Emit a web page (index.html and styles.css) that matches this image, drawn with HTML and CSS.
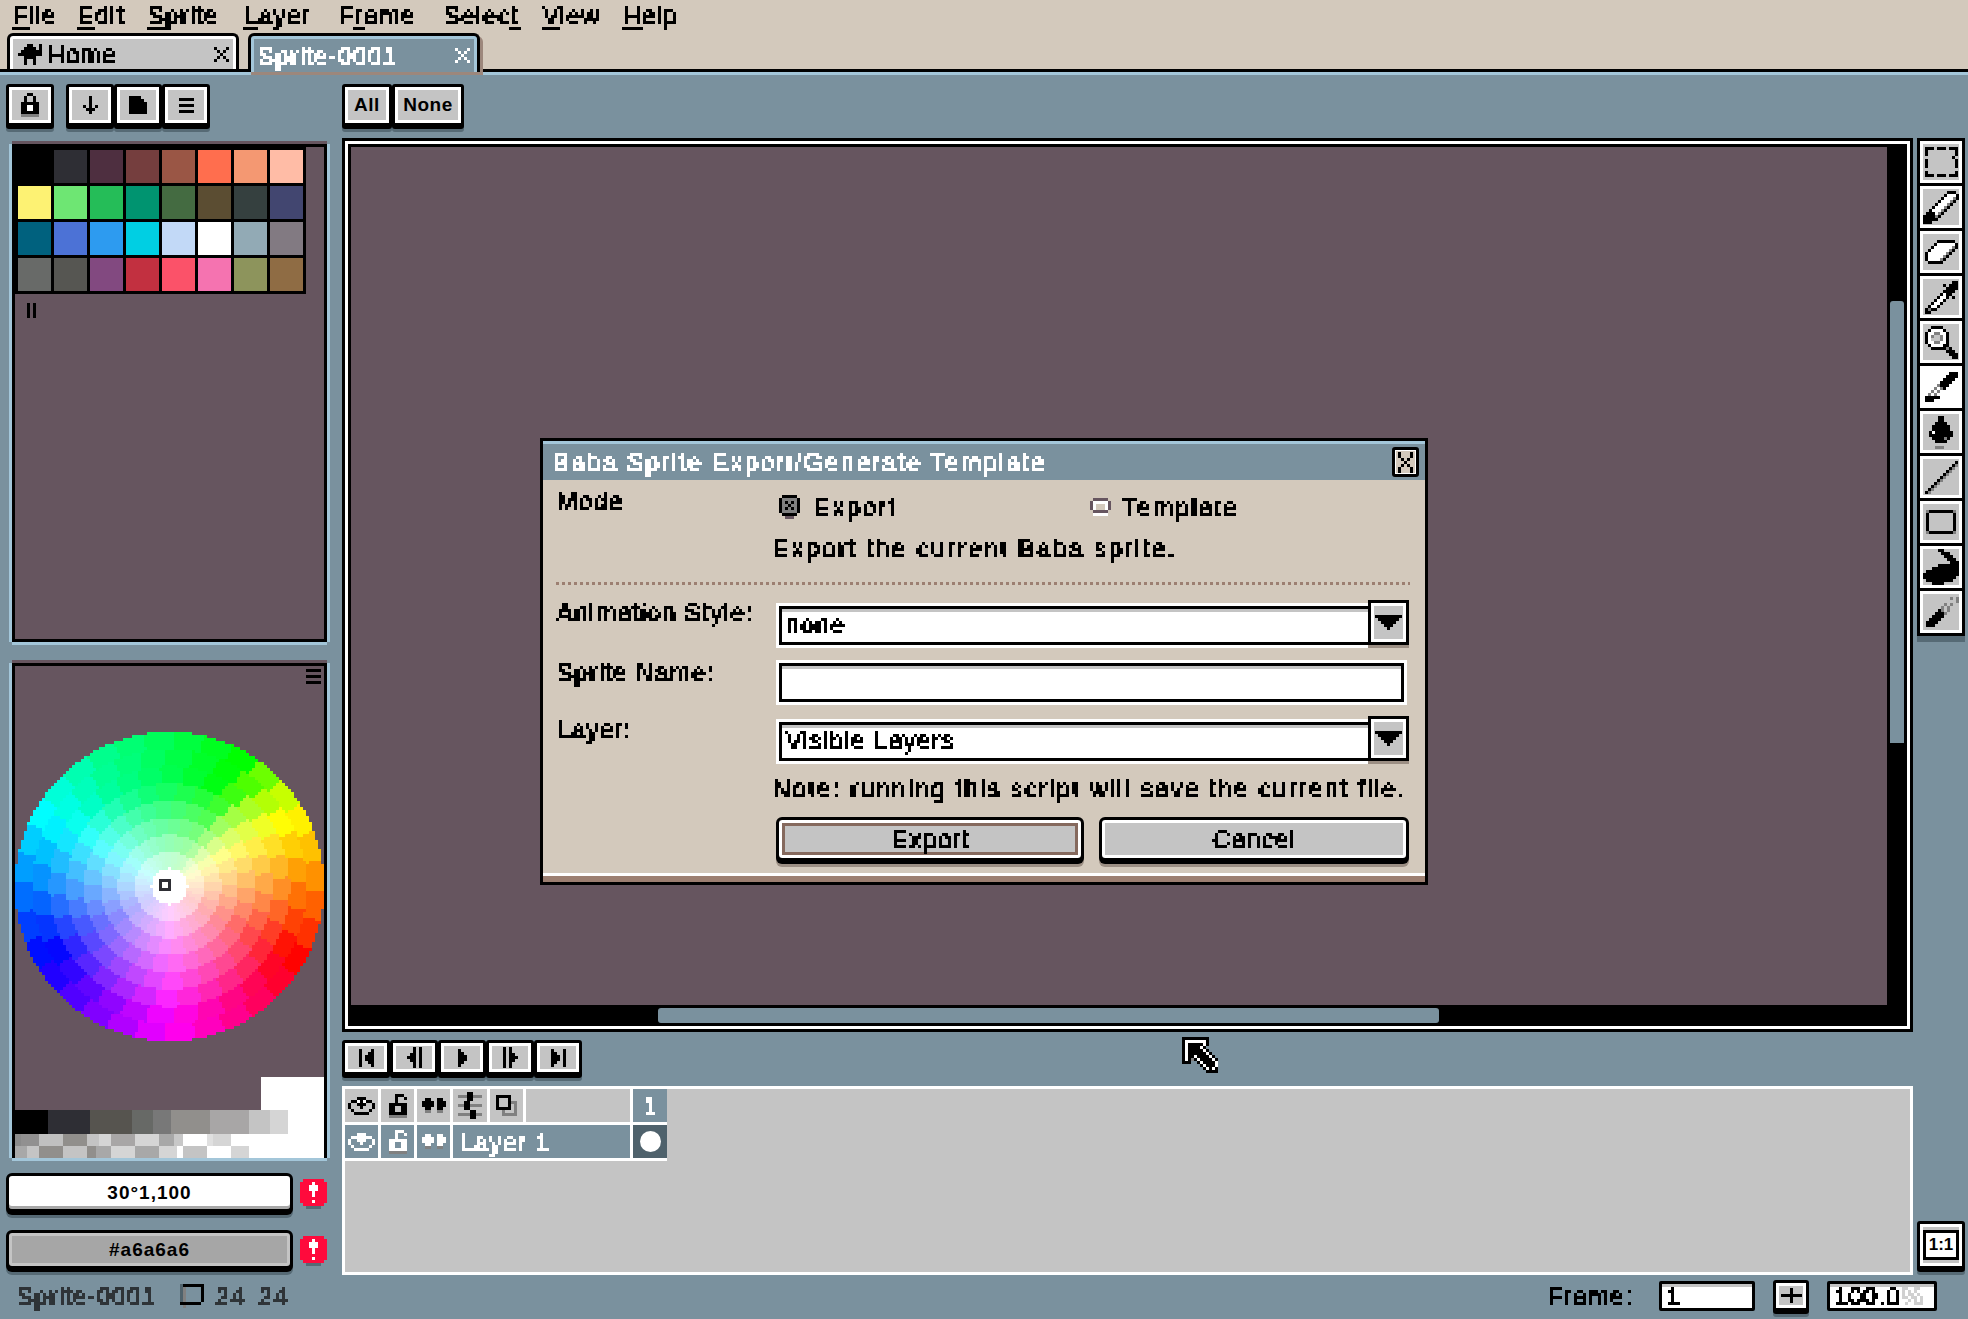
FILE: index.html
```html
<!DOCTYPE html>
<html lang="en">
<head>
    <meta charset="UTF-8">
    <title>Aseprite</title>
    <link rel="stylesheet" href="styles.css">
</head>
<body>

    <!-- blocky look for the text -->
    <svg class="defs" width="0" height="0">
        <filter id="pix" filterUnits="userSpaceOnUse" x="-9" y="-9" width="1200" height="60" color-interpolation-filters="sRGB">
            <feOffset in="SourceGraphic" dx="1" dy="0" result="ox"/>
            <feOffset in="SourceGraphic" dx="0" dy="1" result="oy"/>
            <feOffset in="SourceGraphic" dx="1" dy="1" result="oxy"/>
            <feMerge result="fat">
                <feMergeNode in="SourceGraphic"/>
                <feMergeNode in="ox"/>
                <feMergeNode in="oy"/>
                <feMergeNode in="oxy"/>
            </feMerge>
            <feFlood x="1" y="1" width="1" height="1"/>
            <feComposite width="3" height="3"/>
            <feTile result="grid"/>
            <feComposite in="fat" in2="grid" operator="in"/>
            <feComponentTransfer><feFuncA type="discrete" tableValues="0 0 1"/></feComponentTransfer>
            <feMorphology operator="dilate" radius="1"/>
        </filter>
    </svg>

    <div class="menubar">
        <span class="t m-file"><u>F</u>ile</span>
        <span class="t m-edit"><u>E</u>dit</span>
        <span class="t m-sprite"><u>S</u>prite</span>
        <span class="t m-layer"><u>L</u>ayer</span>
        <span class="t m-frame">F<u>r</u>ame</span>
        <span class="t m-select">Selec<u>t</u></span>
        <span class="t m-view"><u>V</u>iew</span>
        <span class="t m-help"><u>H</u>elp</span>
    </div>

    <div class="tabbar">
        <div class="tab tab-home">
            <i class="ic" data-i="home"></i>
            <span class="t tab-name">Home</span>
            <i class="ic" data-i="close"></i>
        </div>
        <div class="tab tab-active">
            <span class="t tab-name">Sprite-0001</span>
            <i class="ic" data-i="close"></i>
        </div>
    </div>

    <div class="main">
        <div class="left">
            <div class="toolbar">
                <div class="btn btn-lock"><i class="ic" data-i="lock"></i></div>
                <div class="btn-group">
                    <div class="btn btn-sq"><i class="ic" data-i="down"></i></div>
                    <div class="btn btn-sq"><i class="ic" data-i="page"></i></div>
                    <div class="btn btn-sq"><i class="ic" data-i="menu"></i></div>
                </div>
            </div>

            <div class="panel panel-palette">
                <div class="palette">
                    <b class="c0"></b><b class="c1"></b><b class="c2"></b><b class="c3"></b><b class="c4"></b><b class="c5"></b><b class="c6"></b><b class="c7"></b>
                    <b class="c8"></b><b class="c9"></b><b class="c10"></b><b class="c11"></b><b class="c12"></b><b class="c13"></b><b class="c14"></b><b class="c15"></b>
                    <b class="c16"></b><b class="c17"></b><b class="c18"></b><b class="c19"></b><b class="c20"></b><b class="c21"></b><b class="c22"></b><b class="c23"></b>
                    <b class="c24"></b><b class="c25"></b><b class="c26"></b><b class="c27"></b><b class="c28"></b><b class="c29"></b><b class="c30"></b><b class="c31"></b>
                </div>
                <div class="pause"><i class="ic" data-i="pause"></i></div>
            </div>

            <div class="panel panel-color">
                <div class="color-head"><i class="ic" data-i="menu"></i></div>
                <div class="wheel-box">
                    <canvas id="wheel" width="103" height="103"></canvas>
                    <span class="wheel-mark"></span>
                </div>
                <div class="white-block"></div>
                <div class="shades"></div>
                <div class="checks checks-a"></div>
                <div class="checks checks-b"></div>
            </div>

            <div class="color-row">
                <div class="pill pill-white"><span class="pill-text">30°1,100</span></div>
                <i class="warn ic" data-i="warn"></i>
            </div>
            <div class="color-row color-row-2">
                <div class="pill pill-gray"><span class="pill-text">#a6a6a6</span></div>
                <i class="warn ic" data-i="warn"></i>
            </div>
        </div>

        <div class="center">
            <div class="toolbar">
                <div class="btn-group">
                    <div class="btn btn-all"><span class="btn-bold">All</span></div>
                    <div class="btn btn-none"><span class="btn-bold">None</span></div>
                </div>
            </div>

            <div class="frame">
                <div class="frame-in">
                    <div class="canvas"></div>
                    <div class="scroll-v"><span class="thumb-v"></span></div>
                    <div class="scroll-h"><span class="thumb-h"></span></div>
                    <div class="scroll-end"></div>
                </div>
            </div>

            <div class="anim-row">
                <div class="btn btn-anim"><i class="ic" data-i="first"></i></div>
                <div class="btn btn-anim"><i class="ic" data-i="prev"></i></div>
                <div class="btn btn-anim"><i class="ic" data-i="play"></i></div>
                <div class="btn btn-anim"><i class="ic" data-i="next"></i></div>
                <div class="btn btn-anim"><i class="ic" data-i="last"></i></div>
            </div>

            <div class="timeline">
                <div class="tl-grid">
                    <div class="tl-cell"><i class="ic" data-i="eye"></i></div>
                    <div class="tl-cell"><i class="ic" data-i="unlock"></i></div>
                    <div class="tl-cell"><i class="ic" data-i="dots"></i></div>
                    <div class="tl-cell"><i class="ic" data-i="sliders"></i></div>
                    <div class="tl-cell"><i class="ic" data-i="overlap"></i></div>
                    <div class="tl-cell"></div>
                    <div class="tl-cell tl-blue"><span class="t tl-num">1</span></div>

                    <div class="tl-cell tl-blue"><i class="ic" data-i="eye"></i></div>
                    <div class="tl-cell tl-blue"><i class="ic" data-i="unlock"></i></div>
                    <div class="tl-cell tl-blue"><i class="ic" data-i="dots"></i></div>
                    <div class="tl-cell tl-blue tl-name"><span class="t">Layer 1</span></div>
                    <div class="tl-cell tl-dark"><span class="cel-dot"></span></div>
                </div>
            </div>

            <!-- dialog sits on top of the canvas -->
            <div class="dialog">
                <div class="dlg-title">
                    <span class="t dlg-title-text">Baba Sprite Export/Generate Template</span>
                    <div class="dlg-close"><i class="ic" data-i="x"></i></div>
                </div>
                <div class="dlg-body">
                    <div class="dlg-mode">
                        <span class="t dlg-label">Mode</span>
                        <div class="dlg-radios">
                            <div class="radio radio-a"><i class="ic" data-i="radioOn"></i><span class="t">Export</span></div>
                            <div class="radio"><i class="ic" data-i="radioOff"></i><span class="t">Template</span></div>
                        </div>
                    </div>
                    <p class="t dlg-text dlg-desc">Export the current Baba sprite.</p>
                    <div class="dlg-sep"></div>

                    <div class="dlg-row dlg-row-anim">
                        <span class="t dlg-label">Animation Style:</span>
                        <div class="combo">
                            <div class="input combo-input"><span class="t">none</span></div>
                            <div class="combo-btn"><i class="ic" data-i="tri"></i></div>
                        </div>
                    </div>
                    <div class="dlg-row dlg-row-name">
                        <span class="t dlg-label">Sprite Name:</span>
                        <div class="input name-input"></div>
                    </div>
                    <div class="dlg-row dlg-row-layer">
                        <span class="t dlg-label">Layer:</span>
                        <div class="combo">
                            <div class="input combo-input"><span class="t">Visible Layers</span></div>
                            <div class="combo-btn"><i class="ic" data-i="tri"></i></div>
                        </div>
                    </div>
                    <p class="t dlg-text dlg-note">Note: running this script will save the current file.</p>
                    <div class="dlg-buttons">
                        <div class="dbtn dbtn-focus"><span class="t">Export</span></div>
                        <div class="dbtn"><span class="t">Cancel</span></div>
                    </div>
                </div>
            </div>

            <i class="ic cursor" data-i="cursor"></i>
        </div>

        <div class="right">
            <div class="tools">
                <div class="tool"><i class="ic" data-i="marquee"></i></div>
                <div class="tool"><i class="ic" data-i="pencil"></i></div>
                <div class="tool"><i class="ic" data-i="eraser"></i></div>
                <div class="tool"><i class="ic" data-i="dropper"></i></div>
                <div class="tool"><i class="ic" data-i="zoom"></i></div>
                <div class="tool tool-on"><i class="ic" data-i="pen"></i></div>
                <div class="tool"><i class="ic" data-i="drop"></i></div>
                <div class="tool"><i class="ic" data-i="line"></i></div>
                <div class="tool"><i class="ic" data-i="rect"></i></div>
                <div class="tool"><i class="ic" data-i="blob"></i></div>
                <div class="tool"><i class="ic" data-i="spray"></i></div>
            </div>
            <div class="btn btn-ratio"><span class="ratio-box">1:1</span></div>
        </div>
    </div>

    <div class="statusbar">
        <span class="t st-name">Sprite-0001</span>
        <i class="ic st-icon" data-i="size"></i>
        <span class="t st-num">24</span>
        <span class="t st-num">24</span>
        <span class="t st-frame">Frame:</span>
        <div class="st-input st-input-frame"><span class="t">1</span></div>
        <div class="btn btn-plus"><i class="ic" data-i="plus"></i></div>
        <div class="st-input st-input-zoom"><span class="t">100.0<span class="st-pct">%</span></span></div>
    </div>

    <script src="app.js"></script>
</body>
</html>
```
FILE: styles.css
```css
* {
    box-sizing: border-box;
}
html, body {
    margin: 0;
    height: 100%;
}
body {
    width: 1968px;
    height: 1319px;
    overflow: hidden;
    background-color: #7a919e;
    font-family: "Liberation Sans", Arial, sans-serif;
    font-size: 25px;
    line-height: 30px;
    color: #000;
}
.defs {
    position: absolute;
}
.t {
    filter: url(#pix);
    letter-spacing: 1px;
    white-space: pre;
}
.ic {
    display: block;
    flex: none;
    color: #000;
}
.ic svg {
    display: block;
}

/* menu + tabs */
.menubar {
    display: flex;
    height: 33px;
    padding: 0 0 4px 12px;
    background-color: #d3c9bc;
    align-items: center;
}
.menubar u {
    text-decoration-thickness: 3px;
    text-underline-offset: 3px;
}
.m-file { width: 65px; }
.m-edit { width: 70px; }
.m-sprite { width: 96px; }
.m-layer { width: 95px; }
.m-frame { width: 105px; }
.m-select { width: 99px; }
.m-view { width: 80px; }
.tabbar {
    display: flex;
    height: 42px;
    padding-left: 7px;
    gap: 9px;
    background-color: #d3c9bc;
    border-bottom: 3px solid #a3c6d9;
    box-shadow: inset 0 -3px 0 #000;
}
.tab {
    display: flex;
    align-items: center;
    height: 36px;
    width: 232px;
    padding: 3px 7px 0 8px;
    background-color: #c4c4c4;
    border: 3px solid #000;
    border-bottom: 0;
    border-radius: 6px 6px 0 0;
    box-shadow: inset 0 3px 0 #fff, inset 3px 0 0 #fff, inset -3px 0 0 #fff;
}
.tab .ic:first-child {
    margin-right: 4px;
}
.tab-name {
    flex: 1;
}
.tab-active {
    height: 39px;
    color: #fff;
    padding-left: 6px;
    background-color: #7a919e;
    border-color: #000;
    box-shadow: inset 0 3px 0 #a3c6d9, inset 3px 0 0 #a3c6d9, inset -3px 0 0 #a3c6d9, 3px 3px 0 #9c877c;
}
.tab-active .ic {
    color: #fff;
}

/* main columns */
.main {
    display: grid;
    grid-template-columns: 342px 1575px 51px;
    height: 1201px;
}
.toolbar {
    display: flex;
    height: 57px;
    padding-top: 9px;
}
.btn {
    display: flex;
    align-items: center;
    justify-content: center;
    height: 42px;
    background-color: #c4c4c4;
    border: 3px solid #000;
    border-radius: 3px;
    box-shadow: inset 0 0 0 3px #fff, 0 3px 0 #000, 0 6px 0 #566a75;
}
.btn-group {
    display: flex;
}
.btn-lock {
    width: 48px;
    margin-left: 6px;
}
.left .btn-group {
    margin-left: 12px;
}
.btn-sq {
    width: 48px;
}
.btn-all {
    width: 50px;
}
.btn-none {
    width: 72px;
}
.btn-bold {
    font-weight: bold;
    font-size: 19px;
    letter-spacing: 0.5px;
}

/* left column */
.panel {
    width: 315px;
    margin-left: 12px;
    background-color: #66555f;
    border: 3px solid #000;
    box-shadow: -3px 0 0 #a3c6d9, 3px 0 0 #a3c6d9, 0 3px 0 #a3c6d9, 0 -3px 0 #66555f;
}
.panel-palette {
    height: 498px;
    margin-top: 12px;
}
.palette {
    display: grid;
    grid-template-columns: repeat(8, 33px);
    grid-auto-rows: 33px;
    gap: 3px;
    width: 291px;
    padding: 3px;
    background-color: #000;
}
.palette b { display: block; }
.c0 { background: #000; }
.c1 { background: #2e2e34; }
.c2 { background: #4e2f40; }
.c3 { background: #753e3e; }
.c4 { background: #9a5645; }
.c5 { background: #ff6e4e; }
.c6 { background: #f49872; }
.c7 { background: #ffbca6; }
.c8 { background: #fdf273; }
.c9 { background: #6ee673; }
.c10 { background: #25bd58; }
.c11 { background: #009470; }
.c12 { background: #446b41; }
.c13 { background: #5b4d32; }
.c14 { background: #35403f; }
.c15 { background: #424670; }
.c16 { background: #00617e; }
.c17 { background: #4c72d6; }
.c18 { background: #2d9bf0; }
.c19 { background: #00cfe3; }
.c20 { background: #c2d9f7; }
.c21 { background: #fff; }
.c22 { background: #92aab5; }
.c23 { background: #827a82; }
.c24 { background: #686a68; }
.c25 { background: #565652; }
.c26 { background: #824980; }
.c27 { background: #c23040; }
.c28 { background: #fb5269; }
.c29 { background: #f573b0; }
.c30 { background: #8d945c; }
.c31 { background: #8f6c44; }
.pause {
    padding: 9px 0 0 12px;
}
.panel-color {
    height: 495px;
    margin-top: 21px;
    display: flex;
    flex-direction: column;
}
.color-head {
    display: flex;
    justify-content: flex-end;
    flex: none;
    height: 66px;
    padding: 3px 3px 0 0;
}
.wheel-box {
    position: relative;
    flex: none;
    width: 309px;
    height: 309px;
}
#wheel {
    display: block;
    width: 309px;
    height: 309px;
    image-rendering: pixelated;
}
.wheel-mark {
    position: absolute;
    left: 144px;
    top: 147px;
    width: 12px;
    height: 12px;
    border: 3px solid #2e2e34;
    background: #fff;
}
.white-block {
    flex: none;
    width: 63px;
    height: 33px;
    margin: 36px 0 0 auto;
    background: #fff;
}
.shades {
    flex: none;
    height: 24px;
    background: linear-gradient(to right, #000 33px, #2e2e34 33px 75px, #56544f 75px 117px, #676966 117px 138px, #787878 138px 156px, #918f8c 156px 195px, #a8a6a6 195px 234px, #c4c4c4 234px 255px, #d5d5d5 255px 273px, #fff 273px);
}
.checks {
    flex: none;
    height: 12px;
}
.checks-a {
    background: linear-gradient(to right, #8a8a8a 6px, #919090 6px 24px, #c0c0c0 24px 48px, #918f8c 48px 72px, #c4c4c4 72px 84px, #d5d5d5 84px 96px, #a8a6a6 96px 120px, #d5d5d5 120px 144px, #a8a8a8 144px 159px, #c8c8c8 159px 168px, #fff 168px 192px, #e0e0e0 192px 198px, #d5d5d5 198px 216px, #fff 216px);
}
.checks-b {
    background: linear-gradient(to right, #a8a8a8 12px, #c4c4c4 12px 24px, #918f8c 24px 48px, #c4c4c4 48px 72px, #918f8c 72px 81px, #a8a8a8 81px 96px, #d5d5d5 96px 120px, #a8a8a8 120px 144px, #d5d5d5 144px 162px, #fff 162px 168px, #c4c4c4 168px 192px, #fff 192px 216px, #d5d5d5 216px 234px, #fff 234px);
}
.color-row {
    display: flex;
    align-items: flex-start;
    margin: 15px 0 0 6px;
}
.color-row-2 {
    margin-top: 18px;
}
.pill {
    display: flex;
    align-items: center;
    justify-content: center;
    width: 287px;
    height: 39px;
    border: 3px solid #000;
    border-radius: 6px;
}
.pill-white {
    background: #fff;
    box-shadow: inset 0 -3px 0 #a8a8a8, 0 3px 0 #000, 0 6px 0 #566a75;
}
.pill-gray {
    background: #a6a6a6;
    box-shadow: inset 0 0 0 3px #c4c4c4, inset 0 -3px 0 #d5d5d5, 0 3px 0 #000, 0 6px 0 #566a75;
}
.pill-text {
    font-weight: bold;
    font-size: 19px;
    letter-spacing: 1px;
}
.warn {
    margin: 6px 0 0 7px;
}

/* center column */
.center {
    position: relative;
    display: flex;
    flex-direction: column;
}
.frame {
    width: 1571px;
    height: 894px;
    margin-top: 6px;
    border: 3px solid #000;
}
.frame-in {
    display: grid;
    grid-template-columns: 1539px 20px;
    grid-template-rows: 858px 21px;
    height: 100%;
    background-color: #000;
    border: 3px solid #fff;
    padding: 3px 0 0 0;
}
.canvas {
    background-color: #66555f;
    margin-left: 3px;
}
.scroll-v {
    padding: 154px 3px 0 3px;
}
.thumb-v {
    display: block;
    height: 442px;
    background-color: #7a919e;
    border-radius: 3px 3px 0 0;
}
.scroll-h {
    padding: 3px 0 0 310px;
}
.thumb-h {
    display: block;
    width: 781px;
    height: 15px;
    background-color: #7a919e;
    border-radius: 3px;
}
.anim-row {
    display: flex;
    margin-top: 8px;
}
.btn-anim {
    width: 48px;
    height: 35px;
}
.timeline {
    width: 1571px;
    height: 189px;
    margin-top: 11px;
    background-color: #c4c4c4;
    border: 3px solid #fff;
}
.tl-grid {
    display: grid;
    grid-template-columns: 33px 33px 33px 34px 33px 104px 34px;
    grid-auto-rows: 33px;
    gap: 3px;
    width: 322px;
    padding-bottom: 3px;
    background-color: #fff;
}
.tl-cell {
    display: flex;
    align-items: center;
    justify-content: center;
    background-color: #c4c4c4;
}
.tl-blue {
    background-color: #7a919e;
    color: #fff;
}
.tl-blue .ic {
    color: #fff;
}
.tl-dark {
    background-color: #4f626c;
}
.tl-name {
    grid-column: span 3;
    justify-content: flex-start;
    padding-left: 6px;
}
.cel-dot {
    width: 21px;
    height: 21px;
    border-radius: 50%;
    background: #fff;
}

/* dialog */
.dialog {
    position: absolute;
    left: 198px;
    top: 363px;
    width: 888px;
    height: 447px;
    display: flex;
    flex-direction: column;
    background-color: #d3c9bc;
    border: 3px solid #000;
    box-shadow: inset 0 -6px 0 #9c7f71, inset 0 -9px 0 #fff;
}
.dlg-title {
    display: flex;
    align-items: center;
    justify-content: space-between;
    height: 39px;
    padding: 0 6px 0 9px;
    background-color: #7a919e;
    border-top: 3px solid #a3c6d9;
    color: #fff;
}
.dlg-title-text {
    letter-spacing: 1.8px;
}
.dlg-close {
    width: 27px;
    height: 30px;
    display: flex;
    align-items: center;
    justify-content: center;
    background: #d3c9bc;
    border: 3px solid #000;
    border-radius: 3px;
    box-shadow: inset 0 0 0 1px #fff;
}
.dlg-body {
    padding: 6px 15px 0 13px;
}
.dlg-mode {
    display: flex;
    height: 43px;
}
.dlg-label {
    display: block;
    width: 223px;
    flex: none;
}
.dlg-radios {
    display: flex;
    padding-top: 4px;
}
.radio {
    display: flex;
    align-items: center;
    width: 311px;
    height: 34px;
    gap: 11px;
}
.radio .t {
    letter-spacing: 1.9px;
}
.radio-a {
    gap: 13px;
}
.dlg-text {
    display: block;
    margin: 0;
    padding-left: 216px;
}
.dlg-desc {
    margin-top: 4px;
    letter-spacing: 2.1px;
}
.dlg-sep {
    height: 3px;
    margin-top: 19px;
    background: repeating-linear-gradient(to right, #9c7f71 0 3px, transparent 3px 6px);
}
.dlg-row {
    display: flex;
    align-items: flex-start;
}
.dlg-row .dlg-label {
    margin-top: -3px;
}
.dlg-row-anim {
    height: 63px;
    margin-top: 15px;
}
.dlg-row-name {
    height: 53px;
}
.dlg-row-name .dlg-label {
    margin-top: -6px;
}
.dlg-row-layer {
    height: 57px;
}
.combo {
    display: flex;
    width: 630px;
}
.input {
    height: 39px;
    padding-left: 3px;
    line-height: 30px;
    background: #fff;
    border: 3px solid #000;
    border-right: 0;
    box-shadow: 0 0 0 3px #fff, inset 0 3px 0 #c4c4c4;
}
.combo-input {
    width: 589px;
    margin-top: 6px;
}
.name-input {
    width: 625px;
    border-right: 3px solid #000;
}
.combo-btn {
    display: flex;
    align-items: center;
    justify-content: center;
    width: 41px;
    height: 45px;
    background: #c4c4c4;
    border: 3px solid #000;
    box-shadow: inset 0 0 0 3px #fff, 0 3px 0 #9c8f84;
}
.dlg-row-layer .dlg-label {
    margin-top: -2px;
}
.dlg-note {
    letter-spacing: 1.83px;
}
.dlg-buttons {
    display: flex;
    gap: 15px;
    margin: 14px 0 0 220px;
}
.dbtn {
    display: flex;
    align-items: center;
    justify-content: center;
    width: 310px;
    height: 44px;
    background: #c4c4c4;
    border: 3px solid #000;
    border-radius: 6px;
    box-shadow: inset 0 0 0 3px #fff, 0 3px 0 #000, 0 6px 0 #9c8f84;
}
.dbtn-focus {
    width: 308px;
    box-shadow: inset 0 0 0 3px #fff, inset 0 0 0 6px #85695d, 0 3px 0 #000, 0 6px 0 #9c8f84;
}
.cursor {
    position: absolute;
    left: 840px;
    top: 962px;
}

/* right column */
.right {
    display: flex;
    flex-direction: column;
    padding-top: 63px;
}
.tools {
    width: 48px;
    background: #000;
    border: 3px solid #000;
    box-shadow: 0 6px 0 #566a75;
}
.tool {
    display: flex;
    align-items: center;
    justify-content: center;
    height: 42px;
    margin-bottom: 3px;
    background: #c4c4c4;
    box-shadow: inset 0 0 0 3px #fff;
}
.tool:last-child {
    margin-bottom: 0;
}
.tool-on {
    background: #fff;
}
.btn-ratio {
    width: 48px;
    height: 48px;
    margin-top: 585px;
}
.ratio-box {
    width: 36px;
    height: 30px;
    border: 3px solid #000;
    font-size: 17px;
    font-weight: bold;
    line-height: 24px;
    text-align: center;
    background: #fff;
}

/* status */
.statusbar {
    display: flex;
    align-items: center;
    height: 43px;
    padding: 0 0 4px 16px;
    color: #2f3438;
}
.statusbar > * {
    flex: none;
}
.st-name {
    width: 164px;
}
.st-icon {
    margin-right: 11px;
}
.st-num {
    width: 43px;
}
.st-frame {
    margin-left: 1246px;
    width: 112px;
    color: #000;
}
.st-input {
    display: flex;
    align-items: center;
    height: 30px;
    padding-left: 3px;
    color: #000;
    background: #fff;
    border: 3px solid #000;
    box-shadow: inset 0 3px 0 #c4c4c4;
    border-radius: 2px;
}
.st-input-frame {
    width: 96px;
}
.btn-plus {
    width: 36px;
    height: 31px;
    margin: 0 18px;
}
.st-input-zoom {
    width: 110px;
}
.st-pct {
    color: #d0d0d0;
}
```
FILE: app.js
```js
// pixel art icons, 3 screen px per art px
var ICONS = {
    home: ["...##..#","..####.#",".#######","########","..####..","..#..#..","..#..#.."],
    close: ["#...#",".#.#.","..#..",".#.#.","#...#"],
    x: ["#...#","#...#",".#.#.","..#..",".#.#.","#...#","#...#"],
    lock: ["..##..",".#..#.",".#..#.","######","##ww##","##ww##","######","gggggg"],
    unlock: ["..###.","..#..#","..#...","######","##..##","##..##","######","gggggg"],
    down: ["..#..","..#..","..#..","#.#.#",".###.","..#.."],
    page: ["####..","#####.","######","######","######","######"],
    menu: ["#####",".....","#####",".....","#####"],
    pause: ["#.#","#.#","#.#","#.#","#.#"],
    first: ["#...#","#..##","#.###","#.###","#..##","#...#"],
    prev: ["..#.#","..#.#",".##.#","###.#",".##.#","..#.#","..#.#"],
    play: ["#..","##.","###","###","##.","#.."],
    next: ["#.#..","#.#..","#.##.","#.###","#.##.","#.#..","#.#.."],
    last: ["#...#","##..#","###.#","###.#","##..#","#...#"],
    eye: ["...###...",".##w#w##.","#..###..#","#...#...#",".#.....#.","..#####.."],
    dots: [".##..##.","####.###","####.###",".##..##.",".gg..gg."],
    sliders: ["...##...","ggg##ggg","...##...","..##....","gg##gggg","..##....","....##..","gggg##gg","....##.."],
    overlap: ["#####..","#...#..","#...#gg","#...#.g","#####.g","..g...g","..ggggg"],
    warn: [".RRRRRRR.","RRRRwRRRR","RRRwwwRRR","RRRwwwRRR","RRRRwRRRR","RRRRwRRRR","RRRRRRRRR","RRRRwRRRR",".RRRRRRR.","..SSSSS.."],
    radioOn: [".#####.","#ggggg#","#g#g#g#","#gg#gg#","#g#g#g#","#ggggg#",".#####.","..BBB.."],
    radioOff: [".BBBBB.","BwwwwwB","Bw...wB","Bw...wB",".BBBBB.",".wwwww."],
    tri: ["#########",".#######.","..#####..","...###...","....#...."],
    plus: ["...#...","...#...","#######","...#...","...#..."],
    size: ["D#######","Dg.....#","Dg.....#","Dg.....#","Dg.....#","Dg.....#","#######.",".g......"],
    marquee: ["###.###.###","#.........#","#.........#",".........#.","#.........#","#.........#","#.........#","...........","#.........#","###.###.###"],
    pencil: ["........###.",".......#www#","......#wwwg#",".....#wwwg#.","....#wwwg#..","...#wwwg#...","..#wwwg#....",".###wg#.....","####g#......","#####.......","###........."],
    eraser: ["....######.","...#wwwwww#","..#wwwwwwg#",".#wwwwwwg#.","#wwwwwwg#..","#wwwwwg#...","#wwwwg#....",".#####....."],
    dropper: [".........##","......#.###",".......####","......####.",".....#w##..","....#ww#.#.","...#ww#....","..#ww#.....",".#ww#......","#g##.......","##........."],
    zoom: ["..####.....",".#wwww#....","#wwggww#...","#wg..gw#...","#w...gw#...","#wwggww#...",".#wwww##...","..#####g#..",".......###.","........###",".........##"],
    pen: ["........###",".......####","......####.",".....####..","....g###...","...g.g#....","..g.g......",".g.g.......","#####......","###........"],
    drop: ["...##...","...##...","..####..",".######.",".######.","#w######","########",".####g#.","..####..","........","..ggg..."],
    line: ["..........#",".........#g","........#g.",".......#g..","......#g...",".....#g....","....#g.....","...#g......","..#g.......",".#g........","#g........."],
    rect: ["g########g","#........#","#........#","#........#","#........#","#........#","#........#","g########g"],
    blob: [".....##.....","......###...",".......###..","........###.",".........###",".....#######","...#########",".###########","############","###########.",".#########..","...####....."],
    spray: [".........g.g","...........g",".......g.g..","......g.g...",".....#g.g...","....###g....","...####.....","..####......",".####.......",".###........"],
    cursor: ["#########...","#wwwwwww#...","#w#####w#...","#w####w#....","#w#####w#...","#w######w#..","#w##w####w#.","#w#g#w####w#","###..#w####w","......#w###w",".......#w#w#","........####"]
};
var COLORS = { w: "#fff", g: "#808080", R: "#ff0a3c", S: "#566a75", B: "#66555f", D: "#4f626c" };

function drawIcon(el) {
    var rows = ICONS[el.dataset.i];
    var w = 0;
    var out = "";
    rows.forEach(function (row, y) {
        w = Math.max(w, row.length);
        for (var x = 0; x < row.length; x++) {
            var ch = row[x];
            if (ch === ".") continue;
            var fill = ch === "#" ? "currentColor" : COLORS[ch];
            out += '<rect x="' + x + '" y="' + y + '" width="1" height="1" fill="' + fill + '"/>';
        }
    });
    el.innerHTML = '<svg width="' + w * 3 + '" height="' + rows.length * 3 + '" viewBox="0 0 ' + w + " " + rows.length + '" shape-rendering="crispEdges">' + out + "</svg>";
}
document.querySelectorAll(".ic").forEach(drawIcon);

// screen angle to hue, the wheel has a wide green part
var HUE_MAP = [[-30, 0], [30, 60], [45, 85], [60, 120], [83, 135], [120, 155], [150, 180], [210, 240], [270, 300], [330, 360]];
function angleToHue(a) {
    a = ((a + 30) % 360 + 360) % 360 - 30;
    for (var i = 1; i < HUE_MAP.length; i++) {
        if (a <= HUE_MAP[i][0]) {
            var p = HUE_MAP[i - 1];
            var q = HUE_MAP[i];
            return p[1] + (a - p[0]) / (q[0] - p[0]) * (q[1] - p[1]);
        }
    }
    return 0;
}
function hsv(h, s) {
    var f = function (n) {
        var k = (n + h / 60) % 6;
        return Math.round(255 * (1 - s * Math.max(0, Math.min(k, 4 - k, 1))));
    };
    return [f(5), f(3), f(1)];
}

// color wheel, one canvas px = 3 screen px
function drawWheel() {
    var c = document.getElementById("wheel");
    var ctx = c.getContext("2d");
    var R = 51.5;
    var rings = 9;
    for (var y = 0; y < 103; y++) {
        for (var x = 0; x < 103; x++) {
            var dx = x + 0.5 - R;
            var dy = R - (y + 0.5);
            var r = Math.sqrt(dx * dx + dy * dy);
            if (r > R) continue;
            var ring = Math.floor(r / R * rings);
            var rgb = [255, 255, 255];
            if (r > 6) {
                var step = 360 / 32;
                var a = Math.atan2(dy, dx) * 180 / Math.PI + ring * 3;
                a = (Math.floor((a + 3600) / step) + 0.5) * step - ring * 3;
                var hue = angleToHue(a);
                var green = Math.max(0, 1 - Math.abs(hue - 145) / 60);
                var s = Math.min(1, (ring + 0.5) / (rings * (0.85 - 0.2 * green)));
                rgb = hsv(hue, s);
            }
            ctx.fillStyle = "rgb(" + rgb.join(",") + ")";
            ctx.fillRect(x, y, 1, 1);
        }
    }
}
drawWheel();
```
